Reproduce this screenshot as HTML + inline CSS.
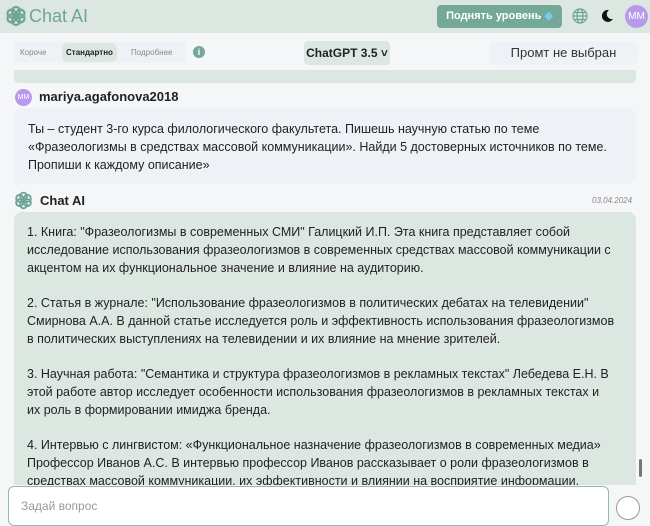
<!DOCTYPE html>
<html><head><meta charset="utf-8"><style>
*{box-sizing:border-box;margin:0;padding:0}
body{width:650px;height:510px;overflow:hidden;background:#f5f6f8;font-family:"Liberation Sans",sans-serif;color:#222;position:relative}
.hdr{position:absolute;left:0;top:0;width:650px;height:33px;background:#dde7e2}
.logo{position:absolute;left:5px;top:5px}
.logotxt{position:absolute;left:29px;top:6px;font-size:18px;color:#6ea596}
.up{position:absolute;left:437px;top:5px;width:125px;height:23px;background:#74a899;border-radius:4px;color:#fff;font-size:11px;font-weight:bold;line-height:23px;text-align:center}
.av{position:absolute;border-radius:50%;background:#b79aec;color:#fff;text-align:center}
.seg{position:absolute;left:14px;top:41px;width:172px;height:22px;background:#eef1f5;border-radius:6px;font-size:8px;color:#888}
.seg span{position:absolute;top:7px;white-space:nowrap}
.seg .on{background:#dde7e2;color:#222;font-weight:bold;border-radius:5px;top:2px;padding:5px 4px;left:48px}
.gpt{position:absolute;left:304px;top:41px;width:86px;height:24px;background:#dde7e2;border-radius:4px;font-size:12px;font-weight:bold;line-height:24px;text-align:center}
.prm{position:absolute;left:489px;top:41px;width:149px;height:24px;background:#eef1f5;border-radius:6px;font-size:13px;line-height:24px;text-align:center;color:#333}
.bar{position:absolute;left:14px;top:70px;width:622px;height:13px;background:#dde7e2;border-radius:0 0 5px 5px}
.um{position:absolute;left:14px;top:108px;width:622px;height:76px;background:#eef1f5;border-radius:8px;padding:12px 14px;font-size:12.5px;line-height:18px;color:#222;white-space:nowrap}
.am{position:absolute;left:14px;top:212px;width:622px;height:273px;background:#dde7e2;border-radius:8px 8px 0 0;padding:11px 13px;font-size:12.5px;line-height:18px;color:#222;overflow:hidden;white-space:nowrap}
.am p{margin-bottom:17px}
.inp{position:absolute;left:8px;top:486px;width:601px;height:40px;background:#fff;border:1px solid #8fbcae;border-radius:6px;font-size:12px;color:#999;padding:12px 12px}
</style></head><body>
<div class="hdr"></div>
<svg class="logo" width="22" height="22" viewBox="0 0 22 22" fill="none" stroke="#6ea596" stroke-width="2.2"><circle cx="11" cy="6" r="4"/><circle cx="11" cy="16" r="4"/><circle cx="6.5" cy="8.5" r="4"/><circle cx="15.5" cy="8.5" r="4"/><circle cx="6.5" cy="13.5" r="4"/><circle cx="15.5" cy="13.5" r="4"/></svg>
<div class="logotxt">Chat AI</div>
<div class="up">Поднять уровень <span style="color:#7cc8f0">◆</span></div>
<svg style="position:absolute;left:572px;top:8px" width="16" height="16" viewBox="0 0 16 16" fill="none" stroke="#6ea596" stroke-width="1.2"><circle cx="8" cy="8" r="7"/><ellipse cx="8" cy="8" rx="3" ry="7"/><path d="M1 8h14M2 4.5h12M2 11.5h12"/></svg>
<svg style="position:absolute;left:602px;top:9px" width="12" height="13" viewBox="0 0 12 13"><path d="M7 1A6 6 0 1 0 11 10A5 5 0 0 1 7 1Z" fill="#111"/></svg>
<div class="av" style="left:625px;top:5px;width:23px;height:23px;font-size:10px;line-height:23px">MM</div>
<div class="seg"><span style="left:6px">Короче</span><span class="on">Стандартно</span><span style="left:117px">Подробнее</span></div>
<div style="position:absolute;left:193px;top:46px;width:12px;height:12px;border-radius:50%;background:#74a899;color:#fff;font-size:9px;text-align:center;line-height:12px;font-weight:bold">i</div>
<div class="gpt">ChatGPT 3.5 ˅</div>
<div class="prm">Промт не выбран</div>
<div class="bar"></div>
<div class="av" style="left:15px;top:89px;width:17px;height:17px;font-size:7px;line-height:17px">MM</div>
<div style="position:absolute;left:39px;top:89px;font-size:13px;font-weight:bold">mariya.agafonova2018</div>
<div class="um">Ты – студент 3-го курса филологического факультета. Пишешь научную статью по теме<br>«Фразеологизмы в средствах массовой коммуникации». Найди 5 достоверных источников по теме.<br>Пропиши к каждому описание»</div>
<svg style="position:absolute;left:14px;top:191px" width="19" height="19" viewBox="0 0 22 22" fill="none" stroke="#6ea596" stroke-width="2.2"><circle cx="11" cy="6" r="4"/><circle cx="11" cy="16" r="4"/><circle cx="6.5" cy="8.5" r="4"/><circle cx="15.5" cy="8.5" r="4"/><circle cx="6.5" cy="13.5" r="4"/><circle cx="15.5" cy="13.5" r="4"/></svg>
<div style="position:absolute;left:40px;top:193px;font-size:13px;font-weight:bold">Chat AI</div>
<div style="position:absolute;left:592px;top:196px;font-size:8px;font-style:italic;color:#888">03.04.2024</div>
<div class="am">
<p>1. Книга: "Фразеологизмы в современных СМИ" Галицкий И.П. Эта книга представляет собой<br>исследование использования фразеологизмов в современных средствах массовой коммуникации с<br>акцентом на их функциональное значение и влияние на аудиторию.</p>
<p>2. Статья в журнале: "Использование фразеологизмов в политических дебатах на телевидении"<br>Смирнова А.А. В данной статье исследуется роль и эффективность использования фразеологизмов<br>в политических выступлениях на телевидении и их влияние на мнение зрителей.</p>
<p>3. Научная работа: "Семантика и структура фразеологизмов в рекламных текстах" Лебедева Е.Н. В<br>этой работе автор исследует особенности использования фразеологизмов в рекламных текстах и<br>их роль в формировании имиджа бренда.</p>
<p>4. Интервью с лингвистом: «Функциональное назначение фразеологизмов в современных медиа»<br>Профессор Иванов А.С. В интервью профессор Иванов рассказывает о роли фразеологизмов в<br>средствах массовой коммуникации, их эффективности и влиянии на восприятие информации.</p>
</div>
<div style="position:absolute;left:639px;top:459px;width:3px;height:18px;background:#777;border-radius:2px"></div>
<div class="inp">Задай вопрос</div>
<div style="position:absolute;left:616px;top:496px;width:24px;height:24px;border:1px solid #999;border-radius:50%;background:#fff"></div>
</body></html>
